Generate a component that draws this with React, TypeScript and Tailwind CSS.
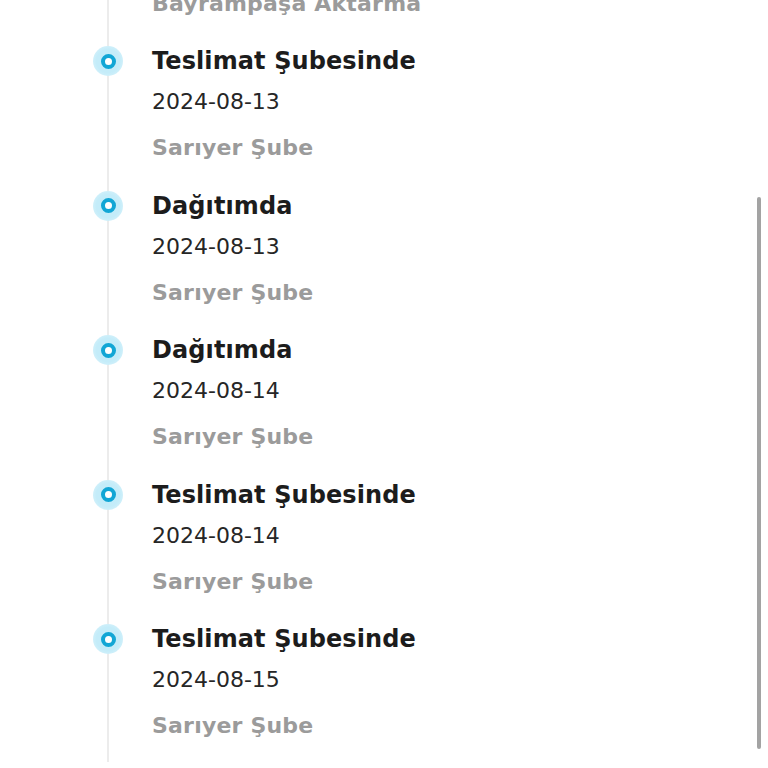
import React from "react";

const items = [
  { title: "Aktarma Merkezinde", date: "2024-08-12", place: "Bayrampaşa Aktarma" },
  { title: "Teslimat Şubesinde", date: "2024-08-13", place: "Sarıyer Şube" },
  { title: "Dağıtımda", date: "2024-08-13", place: "Sarıyer Şube" },
  { title: "Dağıtımda", date: "2024-08-14", place: "Sarıyer Şube" },
  { title: "Teslimat Şubesinde", date: "2024-08-14", place: "Sarıyer Şube" },
  { title: "Teslimat Şubesinde", date: "2024-08-15", place: "Sarıyer Şube" },
];

export default function App() {
  return (
    <div
      className="relative w-[768px] h-[768px] overflow-hidden bg-white"
      style={{ fontFamily: "'DejaVu Sans', sans-serif" }}
    >
      <div className="flex pl-[93px]">
        {/* timeline rail */}
        <div className="relative w-[30px] shrink-0">
          <div className="absolute left-[14px] top-0 h-[762px] w-[2px] bg-[#ececec]" />
        </div>
        <div className="flex flex-col mt-[-103.5px] ml-[29px]">
          {items.map((it, i) => (
            <div key={i} className="relative h-[144.5px]">
              <div className="absolute left-[-59px] top-[5px] flex h-[30px] w-[30px] items-center justify-center rounded-full bg-[radial-gradient(circle,#c4ecf9_55%,#e3f6fc_100%)]">
                <div className="h-[15px] w-[15px] rounded-full border-[4px] border-[#12a6d5] bg-white" />
              </div>
              <div className="h-[40px] text-[24px] font-bold leading-[40px] tracking-[0.1px] text-[#1c1c1c]">
                {it.title}
              </div>
              <div className="h-[42px] text-[22px] leading-[42px] text-[#262626]">
                {it.date}
              </div>
              <div className="h-[50px] text-[22px] font-bold leading-[50px] tracking-[0.2px] text-[#9b9b9b]">
                {it.place}
              </div>
            </div>
          ))}
        </div>
      </div>
      {/* scrollbar thumb */}
      <div className="absolute right-[7px] top-[197px] h-[552px] w-[4px] rounded-full bg-[#a3a3a3]" />
    </div>
  );
}
